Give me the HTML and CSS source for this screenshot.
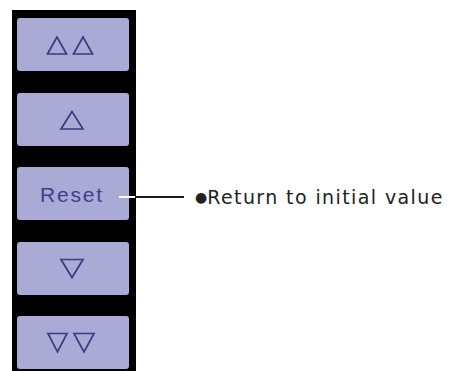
FILE: index.html
```html
<!DOCTYPE html>
<html>
<head>
<meta charset="utf-8">
<link rel="stylesheet" href="styles.css">
</head>
<body>
<div class="figure">
  <div class="panel">
    <div class="btn">
      <svg class="icon" width="112" height="53" viewBox="0 0 112 53"><path d="M40 19 L30.5 36 L49.5 36 Z M66 19 L56.5 36 L75.5 36 Z"/></svg>
    </div>
    <div class="btn">
      <svg class="icon" width="112" height="53" viewBox="0 0 112 53"><path d="M55 18.5 L44 36 L66 36 Z"/></svg>
    </div>
    <div class="btn btn-text">Reset</div>
    <div class="btn">
      <svg class="icon" width="112" height="53" viewBox="0 0 112 53"><path d="M44 17.5 L66 17.5 L55 35.5 Z"/></svg>
    </div>
    <div class="btn">
      <svg class="icon" width="112" height="53" viewBox="0 0 112 53"><path d="M31 17.5 L50 17.5 L40.5 36 Z M57 17.5 L77 17.5 L67 36 Z"/></svg>
    </div>
  </div>
  <div class="callout">
    <span class="lead lead-light"></span>
    <span class="lead lead-dark"></span>
    <span class="note"><span class="dot">●</span>Return to initial value</span>
  </div>
</div>
</body>
</html>
```
FILE: styles.css
```css
html, body {
  margin: 0;
  padding: 0;
  background: #ffffff;
}

.figure {
  position: relative;
  width: 449px;
  height: 371px;
  overflow: hidden;
}

.panel {
  margin-left: 12px;
  margin-top: 10px;
  width: 124px;
  height: 361px;
  box-sizing: border-box;
  background: #000000;
  padding: 8px 7px 0 5px;
  display: flex;
  flex-direction: column;
  gap: 21.5px;
}

.btn {
  width: 112px;
  height: 53px;
  flex: none;
  background: #aaaad6;
  border-radius: 3px;
  display: flex;
  align-items: center;
  justify-content: center;
}

.icon {
  display: block;
}

.icon path {
  fill: none;
  stroke: #383d80;
  stroke-width: 1.7;
  stroke-linejoin: miter;
}

.btn-text {
  font-family: "Liberation Sans", Arial, sans-serif;
  font-size: 21px;
  letter-spacing: 1.8px;
  color: #3c4288;
  padding-right: 2px;
  padding-top: 2px;
  box-sizing: border-box;
}

.callout {
  position: absolute;
  left: 119px;
  top: 186px;
  display: flex;
  align-items: center;
  height: 22px;
}

.lead {
  display: block;
  height: 2px;
}

.lead-light {
  width: 16px;
  background: #ffffff;
}

.lead-dark {
  width: 49px;
  background: #1a1a1a;
}

.note {
  margin-left: 11px;
  font-family: "DejaVu Sans", sans-serif;
  font-size: 19px;
  letter-spacing: 1.4px;
  color: #222222;
  white-space: nowrap;
}

.dot {
  font-size: 14px;
  letter-spacing: 0;
  margin-right: 0;
  position: relative;
  top: -2px;
}
```
